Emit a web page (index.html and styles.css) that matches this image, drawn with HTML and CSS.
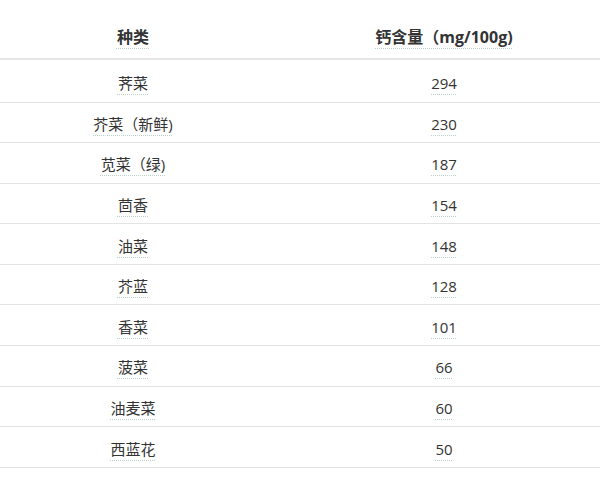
FILE: index.html
```html
<!DOCTYPE html>
<html lang="zh-CN">
<head>
<meta charset="utf-8">
<link rel="stylesheet" href="styles.css">
</head>
<body>
<div class="wrap">
<table class="calcium">
  <thead>
    <tr><th class="c1"><span class="mark">种类</span></th><th class="c2"><span class="mark">钙含量（mg/100g)</span></th></tr>
  </thead>
  <tbody>
    <tr><td><span class="mark">荠菜</span></td><td><span class="mark">294</span></td></tr>
    <tr><td><span class="mark">芥菜（新鲜)</span></td><td><span class="mark">230</span></td></tr>
    <tr><td><span class="mark">苋菜（绿)</span></td><td><span class="mark">187</span></td></tr>
    <tr><td><span class="mark">茴香</span></td><td><span class="mark">154</span></td></tr>
    <tr><td><span class="mark">油菜</span></td><td><span class="mark">148</span></td></tr>
    <tr><td><span class="mark">芥蓝</span></td><td><span class="mark">128</span></td></tr>
    <tr><td><span class="mark">香菜</span></td><td><span class="mark">101</span></td></tr>
    <tr><td><span class="mark">菠菜</span></td><td><span class="mark">66</span></td></tr>
    <tr><td><span class="mark">油麦菜</span></td><td><span class="mark">60</span></td></tr>
    <tr><td><span class="mark">西蓝花</span></td><td><span class="mark">50</span></td></tr>
  </tbody>
</table>
</div>
</body>
</html>
```

FILE: styles.css
```css
html, body {
  margin: 0;
  padding: 0;
  background: #fff;
  overflow: hidden;
}
.wrap {
  width: 600px;
  height: 477px;
  overflow: hidden;
}
.calcium {
  width: 622px;
  border-collapse: collapse;
  table-layout: fixed;
  font-family: "Open Sans", "Noto Sans CJK SC", sans-serif;
  font-size: 15px;
  line-height: 20px;
  color: #333;
}
.c1 { width: 266px; }
.c2 { width: 356px; }
.calcium th {
  box-sizing: border-box;
  height: 59px;
  padding: 0 0 11px;
  font-size: 16px;
  font-weight: bold;
  text-align: center;
  vertical-align: bottom;
  border-bottom: 2px solid #e6e6e6;
}
.calcium td {
  box-sizing: border-box;
  height: 40.6px;
  padding: 3px 0 0;
  text-align: center;
  vertical-align: middle;
  border-bottom: 1px solid #e3e3e3;
}
.calcium tbody tr:first-child td {
  height: 43px;
  padding-top: 4px;
}
.mark {
  text-decoration: underline dotted #b9d3c9;
  text-underline-offset: 5px;
  text-decoration-thickness: 1px;
}
```
